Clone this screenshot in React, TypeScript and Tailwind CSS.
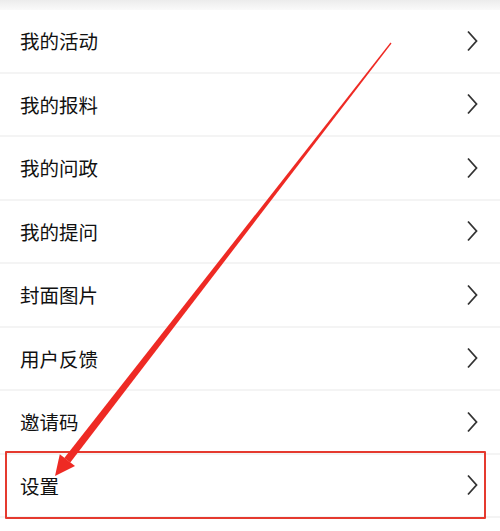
import * as React from "react";

const items = ["我的活动", "我的报料", "我的问政", "我的提问", "封面图片", "用户反馈", "邀请码", "设置"];

function Chevron() {
  return (
    <svg width="14" height="22" viewBox="0 0 14 22" fill="none" className="shrink-0">
      <path d="M3 1.5 L11.5 11 L3 20.5" stroke="#333" strokeWidth="1.8" strokeLinejoin="miter" />
    </svg>
  );
}

export default function App() {
  return (
    <div
      className="relative w-[500px] h-[531px] overflow-hidden bg-white"
      style={{ fontFamily: '"Noto Sans CJK SC", "Noto Sans", sans-serif' }}
    >
      {/* top shadow from previous section */}
      <div className="h-[10px] bg-gradient-to-b from-[#ececec] to-[#fafafa]" />

      <div className="flex flex-col">
        {items.map((label) => (
          <div
            key={label}
            className="flex h-[63.5px] items-center justify-between border-b-2 border-[#f4f4f4] pl-[20px] pr-[21px]"
          >
            <span className="text-[19.5px] leading-none text-[#111]">{label}</span>
            <Chevron />
          </div>
        ))}
      </div>

      {/* highlight box */}
      <div className="absolute left-[5px] top-[451px] h-[68px] w-[481px] rounded-[1px] border-2 border-[#e53a2f]" />

      {/* annotation arrow */}
      <svg className="pointer-events-none absolute inset-0" width="500" height="531" viewBox="0 0 500 531">
        <polygon points="391.5,43.4 390.5,42.6 64.3,457.9 70.3,462.5" fill="#ee2a24" />
        <polygon points="55,476 59.8,454.2 75,466" fill="#ee2a24" />
      </svg>
    </div>
  );
}
